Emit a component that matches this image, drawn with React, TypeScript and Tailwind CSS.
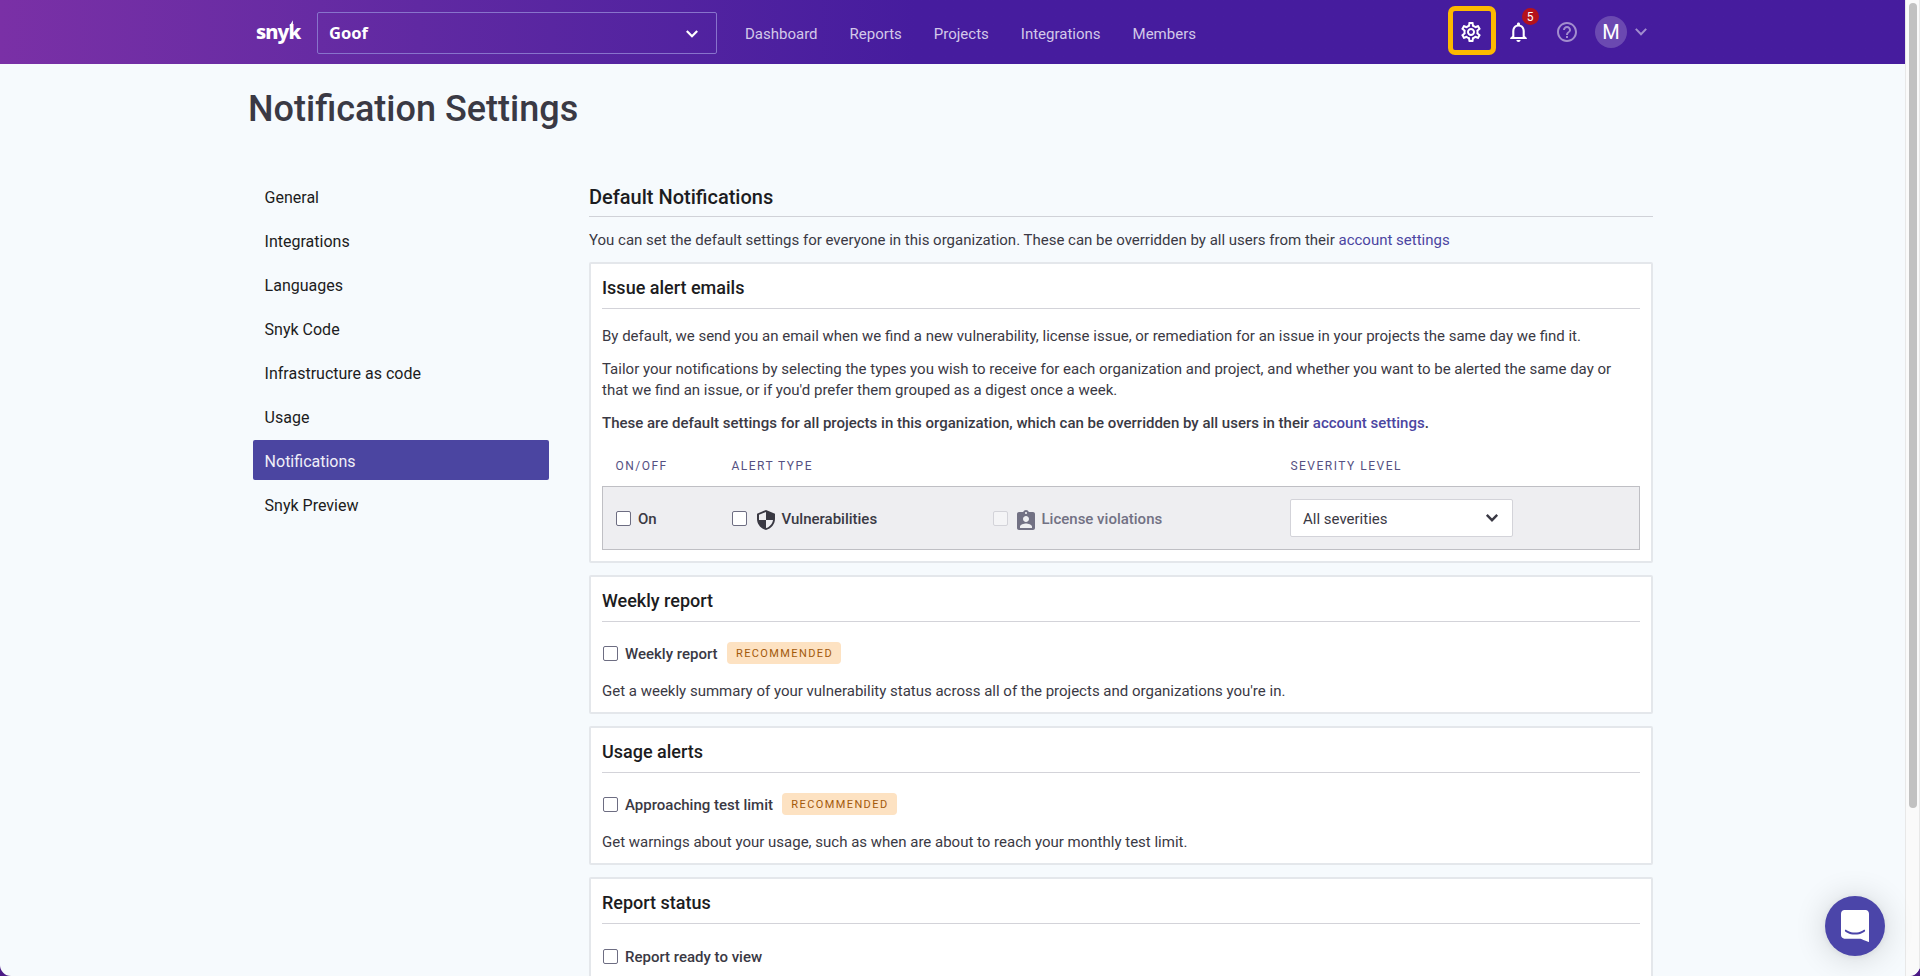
import React from 'react';

const navLinks = ['Dashboard', 'Reports', 'Projects', 'Integrations', 'Members'];

const sections = [
  'General',
  'Integrations',
  'Languages',
  'Snyk Code',
  'Infrastructure as code',
  'Usage',
  'Notifications',
  'Snyk Preview',
];

function Chevron({ className, stroke = 2.2 }: { className?: string; stroke?: number }) {
  return (
    <svg width="14" height="10" viewBox="0 0 14 10" fill="none" className={className}>
      <path d="M1.8 1.9 7 7.2l5.2-5.3" stroke="currentColor" strokeWidth={stroke} />
    </svg>
  );
}

function Header() {
  return (
    <header className="flex h-16 shrink-0 bg-linear-to-r from-[#7a30a6] via-[#6029a2] via-22% to-[#461c9e] to-48% pl-[256px] text-white">
      <div className="flex h-16 w-[61px] items-center">
        <div className="relative pb-px font-['Noto_Sans',sans-serif] text-[20px] leading-6 font-extrabold tracking-[-0.9px]">
          snyk
          <svg className="absolute top-0 left-[33px]" width="5" height="6" viewBox="0 0 5 6" fill="currentColor">
            <path d="M0.6 6 3.9 0.2V6z" />
          </svg>
        </div>
      </div>
      <div className="mt-3 flex h-[42px] w-[400px] items-center justify-between rounded-xs border border-[#8873cc] pr-[17px] pl-[11px]">
        <span className="font-['Noto_Sans',sans-serif] text-[16.5px] leading-6 font-bold">Goof</span>
        <Chevron className="mt-px" />
      </div>
      <nav className="ml-[27px] flex h-16 w-[703px] items-center gap-[31px] pt-1 text-[15px] text-[#d3c8e9]">
        {navLinks.map((link) => (
          <a key={link} className="pl-px">
            {link}
          </a>
        ))}
      </nav>
      <div className="flex h-16 items-center">
        <div className="mt-[-3px] ml-px flex h-[49px] w-12 items-center justify-center rounded-[7px] border-[5px] border-[#fdb900]">
          <svg width="24" height="24" viewBox="0 0 24 24" fill="currentColor" className="mt-[3px] -ml-[2px] shrink-0">
            <path d="M19.43 12.98c.04-.32.07-.64.07-.98 0-.34-.03-.66-.07-.98l2.11-1.65c.19-.15.24-.42.12-.64l-2-3.46c-.09-.16-.26-.25-.44-.25-.06 0-.12.01-.17.03l-2.49 1c-.52-.4-1.08-.73-1.69-.98l-.38-2.65C14.46 2.18 14.25 2 14 2h-4c-.25 0-.46.18-.49.42l-.38 2.65c-.61.25-1.17.59-1.69.98l-2.49-1c-.06-.02-.12-.03-.18-.03-.17 0-.34.09-.43.25l-2 3.46c-.13.22-.07.49.12.64l2.11 1.65c-.04.32-.07.65-.07.98 0 .33.03.66.07.98l-2.11 1.65c-.19.15-.24.42-.12.64l2 3.46c.09.16.26.25.44.25.06 0 .12-.01.17-.03l2.49-1c.52.4 1.08.73 1.69.98l.38 2.65c.03.24.24.42.49.42h4c.25 0 .46-.18.49-.42l.38-2.65c.61-.25 1.17-.59 1.69-.98l2.49 1c.06.02.12.03.18.03.17 0 .34-.09.43-.25l2-3.46c.12-.22.07-.49-.12-.64l-2.11-1.65zm-1.98-1.71c.04.31.05.52.05.73 0 .21-.02.43-.05.73l-.14 1.13.89.7 1.08.84-.7 1.21-1.27-.51-1.04-.42-.9.68c-.43.32-.84.56-1.25.73l-1.06.43-.16 1.13-.2 1.35h-1.4l-.19-1.35-.16-1.13-1.06-.43c-.43-.18-.83-.41-1.23-.71l-.91-.7-1.06.43-1.27.51-.7-1.21 1.08-.84.89-.7-.14-1.13c-.03-.31-.05-.54-.05-.74s.02-.43.05-.73l.14-1.13-.89-.7-1.08-.84.7-1.21 1.27.51 1.04.42.9-.68c.43-.32.84-.56 1.25-.73l1.06-.43.16-1.13.2-1.35h1.39l.19 1.35.16 1.13 1.06.43c.43.18.83.41 1.23.71l.91.7 1.06-.43 1.27-.51.7 1.21-1.07.85-.89.7.14 1.13zM12 8c-2.21 0-4 1.79-4 4s1.79 4 4 4 4-1.79 4-4-1.79-4-4-4zm0 6c-1.1 0-2-.9-2-2s.9-2 2-2 2 .9 2 2-.9 2-2 2z" />
          </svg>
        </div>
        <div className="relative ml-[10px]">
          <svg width="25" height="24" viewBox="0 0 24 24" fill="currentColor" preserveAspectRatio="none">
            <path d="M12 22c1.1 0 2-.9 2-2h-4c0 1.1.9 2 2 2zm6-6v-5c0-3.07-1.63-5.64-4.5-6.32V4c0-.83-.67-1.5-1.5-1.5s-1.5.67-1.5 1.5v.68C7.64 5.36 6 7.92 6 11v5l-2 2v1h16v-1l-2-2zm-2 1H8v-6c0-2.48 1.51-4.5 4-4.5s4 2.02 4 4.5v6z" />
          </svg>
          <span className="absolute top-[-12px] left-[15.5px] flex size-[17px] items-center justify-center rounded-full bg-[#b5121b] text-[12px] leading-none">
            5
          </span>
        </div>
        <svg width="24" height="24" viewBox="0 0 24 24" fill="currentColor" className="ml-6 text-[#a28dce]">
          <path d="M11 18h2v-2h-2v2zm1-16C6.48 2 2 6.48 2 12s4.48 10 10 10 10-4.48 10-10S17.52 2 12 2zm0 18c-4.41 0-8-3.59-8-8s3.59-8 8-8 8 3.59 8 8-3.59 8-8 8zm0-14c-2.21 0-4 1.79-4 4h2c0-1.1.9-2 2-2s2 .9 2 2c0 2-3 1.75-3 5h2c0-2.25 3-2.5 3-5 0-2.21-1.79-4-4-4z" />
        </svg>
        <div className="ml-4 flex size-8 items-center justify-center rounded-full bg-[#6b49b1] text-[20px] leading-none">
          M
        </div>
        <Chevron className="ml-[7px] text-[#a28dce]" stroke={2} />
      </div>
    </header>
  );
}

function Checkbox({ disabled = false }: { disabled?: boolean }) {
  return (
    <span
      className={
        disabled
          ? 'mt-px block size-[15px] shrink-0 rounded-xs border border-[#d3d3d9] bg-[#f4f4f6]'
          : 'mt-px block size-[15px] shrink-0 rounded-xs border border-[#6d6d82] bg-white'
      }
    />
  );
}

function Card({ title, children }: { title: string; children: React.ReactNode }) {
  return (
    <section className="mb-3 rounded-xs border-2 border-[#e4e7eb] bg-white px-[11px] pb-[10px]">
      <h3 className="h-[45px] border-b border-[#d3d3d9] pt-3 text-lg leading-6 font-medium text-[#1c1c21]">{title}</h3>
      {children}
    </section>
  );
}

function Option({ label, recommended = false }: { label: string; recommended?: boolean }) {
  return (
    <div className="mt-5 flex h-[22px] items-center pl-px">
      <Checkbox />
      <span className="mt-[3px] ml-[7px] font-medium">{label}</span>
      {recommended && (
        <span className="ml-[9px] h-[22px] rounded-sm bg-[#fde2c2] pt-px pr-[8px] pl-[9.4px] text-[11px] leading-[21px] tracking-[1.4px] text-[#a3590a]">
          RECOMMENDED
        </span>
      )}
    </div>
  );
}

function AlertTable() {
  return (
    <div>
      <div className="flex h-[52px] items-center pt-[12px] pl-[13.4px] text-xs tracking-[1.5px] text-[#555082]">
        <span className="w-[116px]">ON/OFF</span>
        <span className="w-[559px]">ALERT TYPE</span>
        <span>SEVERITY LEVEL</span>
      </div>
      <div className="mb-px flex h-16 items-center border border-[#bfbfc4] bg-[#eeeef1] pl-[13px] font-medium">
        <div className="flex w-[116px] items-center">
          <Checkbox />
          <span className="mt-[3px] ml-[7px]">On</span>
        </div>
        <div className="flex w-[261px] items-center">
          <Checkbox />
          <svg width="18" height="20" viewBox="3 1 18 22" preserveAspectRatio="none" className="mt-[3px] ml-[10px]" fill="#393842">
            <path d="M12 1L3 5v6c0 5.55 3.84 10.74 9 12 5.16-1.26 9-6.45 9-12V5l-9-4zm0 10.99h7c-.53 4.12-3.28 7.79-7 8.94V12H5V6.3l7-3.11v8.8z" />
          </svg>
          <span className="mt-[3px] ml-[6.5px]">Vulnerabilities</span>
        </div>
        <div className="flex w-[297px] items-center text-[#727184]">
          <Checkbox disabled />
          <svg width="18" height="20" viewBox="3 1 18 20" className="mt-[3px] ml-[9px]" fill="currentColor">
            <path d="M19 3h-4.18C14.4 1.84 13.3 1 12 1c-1.3 0-2.4.84-2.82 2H5c-1.1 0-2 .9-2 2v14c0 1.1.9 2 2 2h14c1.1 0 2-.9 2-2V5c0-1.1-.9-2-2-2zm-7 0c.55 0 1 .45 1 1s-.45 1-1 1-1-.45-1-1 .45-1 1-1zm0 4c1.66 0 3 1.34 3 3s-1.34 3-3 3-3-1.34-3-3 1.34-3 3-3zm6 12H6v-1.4c0-2 4-3.1 6-3.1s6 1.1 6 3.1V19z" />
          </svg>
          <span className="mt-[3px] ml-[6.5px]">License violations</span>
        </div>
        <div className="flex h-[38px] w-[223px] items-center justify-between rounded-xs border border-[#d3d3d9] bg-white pr-[13px] pl-3 font-normal">
          <span className="mt-[3px]">All severities</span>
          <Chevron stroke={2.4} />
        </div>
      </div>
    </div>
  );
}

function Link() {
  return <a className="text-[#4b45a1]">account settings</a>;
}

function ChatLauncher() {
  return (
    <button className="absolute right-[35px] bottom-5 flex size-[60px] items-center justify-center rounded-full bg-[#4b45a9] shadow-[0_1px_6px_rgba(0,0,0,0.06),0_2px_32px_rgba(0,0,0,0.16)]">
      <svg width="28" height="32" viewBox="0 0 28 32" fill="#fff">
        <path d="M28 32s-4.714-1.855-8.527-3.34H3.437C1.54 28.66 0 27.026 0 25.013V3.644C0 1.633 1.54 0 3.437 0h21.125c1.898 0 3.437 1.632 3.437 3.645v18.404H28V32zm-4.139-11.982a.88.88 0 00-1.292-.105c-.03.026-3.015 2.681-8.57 2.681-5.486 0-8.517-2.636-8.571-2.684a.88.88 0 00-1.29.107 1.01 1.01 0 00-.219.708.992.992 0 00.318.664c.142.128 3.537 3.15 9.762 3.15 6.226 0 9.621-3.022 9.763-3.15a.992.992 0 00.317-.664 1.01 1.01 0 00-.218-.707z" />
      </svg>
    </button>
  );
}

export default function App() {
  return (
    <div className="h-[976px] w-[1920px] overflow-hidden bg-[#4b1a86] font-['Roboto',sans-serif] text-[15px] leading-[21px] text-[#3a3944]">
      <div className="relative flex h-[976px] overflow-hidden rounded-b-[11px] bg-[#f6fafd]">
        <div className="flex h-[976px] w-[1905px] shrink-0 flex-col overflow-hidden">
          <Header />
          <main className="pt-[23px] pl-[248px]">
            <h1 className="text-4xl leading-[44px] font-medium">Notification Settings</h1>
            <div className="mt-[45px] flex pl-px">
              <aside className="ml-1 flex w-[296px] flex-col gap-1 text-base text-[#1c1c21]">
                {sections.map((name) => (
                  <a
                    key={name}
                    className={
                      name === 'Notifications'
                        ? 'h-10 rounded-xs bg-[#4b45a1] pt-[3px] pl-[11.6px] leading-[37px] text-[#f0eff8]'
                        : 'h-10 pt-[3px] pl-[11.6px] leading-[37px]'
                    }
                  >
                    {name}
                  </a>
                ))}
              </aside>
              <div className="ml-10 w-[1064px]">
                <h2 className="h-[41px] border-b border-[#d0d2d8] pt-0.5 text-xl leading-[38px] font-medium text-[#1c1c21]">
                  Default Notifications
                </h2>
                <p className="mt-[13px] mb-[11px]">
                  You can set the default settings for everyone in this organization. These can be overridden by all
                  users from their <Link />
                </p>
                <Card title="Issue alert emails">
                  <div className="mt-[17px] flex flex-col gap-3">
                    <p>
                      By default, we send you an email when we find a new vulnerability, license issue, or remediation
                      for an issue in your projects the same day we find it.
                    </p>
                    <p>
                      Tailor your notifications by selecting the types you wish to receive for each organization and
                      project, and whether you want to be alerted the same day or that we find an issue, or if you'd
                      prefer them grouped as a digest once a week.
                    </p>
                    <p className="font-medium">
                      These are default settings for all projects in this organization, which can be overridden by all
                      users in their <Link />.
                    </p>
                  </div>
                  <AlertTable />
                </Card>
                <Card title="Weekly report">
                  <Option label="Weekly report" recommended />
                  <p className="mt-[17px]">
                    Get a weekly summary of your vulnerability status across all of the projects and organizations
                    you're in.
                  </p>
                </Card>
                <Card title="Usage alerts">
                  <Option label="Approaching test limit" recommended />
                  <p className="mt-[17px]">
                    Get warnings about your usage, such as when are about to reach your monthly test limit.
                  </p>
                </Card>
                <Card title="Report status">
                  <div className="pt-px">
                    <Option label="Report ready to view" />
                  </div>
                  <div className="h-10" />
                </Card>
              </div>
            </div>
          </main>
        </div>
        <div className="h-[976px] w-[15px] border-x border-[#e8e8e8] bg-[#fafafa] pt-[3px] pl-[3px]">
          <div className="h-[805px] w-2 rounded-full bg-[#c1c1c1]" />
        </div>
        <ChatLauncher />
      </div>
    </div>
  );
}
